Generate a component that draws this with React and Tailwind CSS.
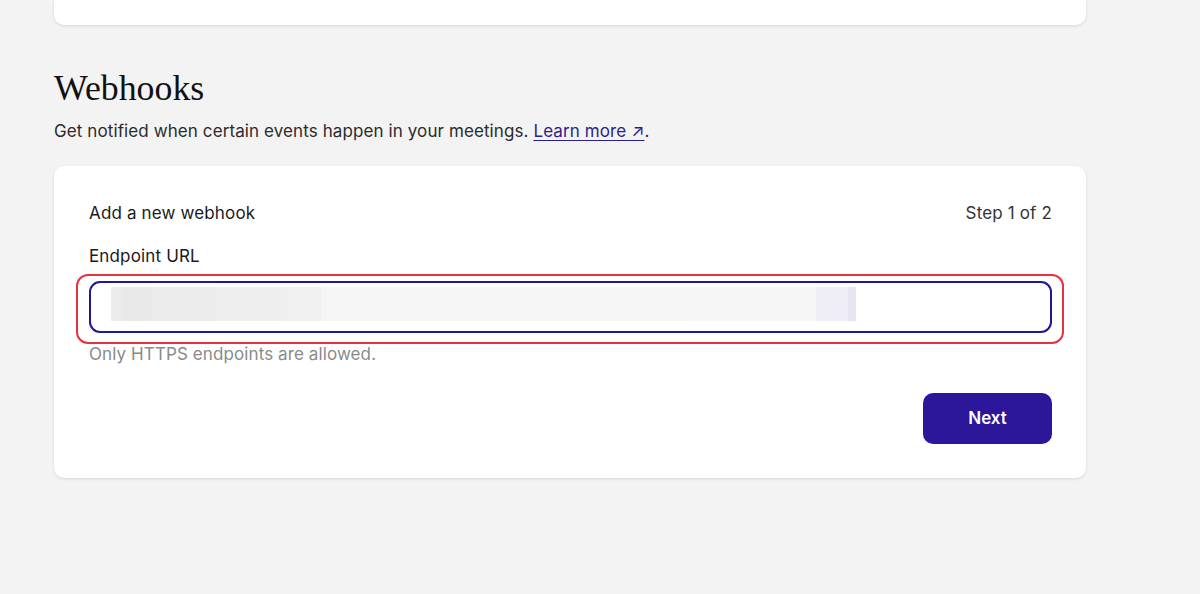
import React from "react";

export default function App() {
  return (
    <div className="w-[1200px] h-[594px] bg-[#f3f3f3] overflow-hidden" style={{ fontFamily: "Inter, 'Noto Sans', sans-serif" }}>
      <div className="ml-[54px] w-[1032px]">
        <div className="h-[25px] bg-white rounded-b-[10px] shadow-[0_1px_3px_rgba(0,0,0,0.12)]" />
        <h2 className="mt-[45px] text-[35.8px] leading-[36px] text-[#111]" style={{ fontFamily: "'Liberation Serif', 'DejaVu Serif', serif" }}>
          Webhooks
        </h2>
        <p className="mt-[13px] text-[17px] tracking-[0.1px] leading-[24px] text-[#2b2b2b]">
          Get notified when certain events happen in your meetings.{" "}
          <a className="text-[#2b1e8f] underline underline-offset-[3px]" href="#">Learn more ↗</a>.
        </p>
        <div className="mt-[23px] bg-white rounded-[10px] shadow-[0_1px_3px_rgba(0,0,0,0.12)] pl-[35px] pr-[34px] pt-[36px] pb-[34px]">
          <div className="flex justify-between items-center text-[17px] tracking-[0.15px] leading-[22px] text-[#1a1a1a]">
            <span>Add a new webhook</span>
            <span className="text-[#333]">Step 1 of 2</span>
          </div>
          <div className="mt-[21px] text-[17px] tracking-[0.15px] leading-[22px] text-[#1a1a1a]">Endpoint URL</div>
          <div className="relative mt-[14px]">
            <div className="absolute -left-[13px] -right-[12px] -top-[7px] -bottom-[11px] border-[2px] border-[#e8323f] rounded-[12px]" />
            <div className="h-[52px] border-[2px] border-[#1f1793] rounded-[11px] pl-[20px] pt-[4px]">
              <div className="flex h-[34px] w-[745px]">
                <div className="w-[10px] bg-[#ececec]" />
                <div className="w-[30px] bg-[#e9e9e9]" />
                <div className="w-[65px] bg-[#ebebeb]" />
                <div className="w-[65px] bg-[#eeeeee]" />
                <div className="w-[40px] bg-[#f0f0f0]" />
                <div className="w-[370px] bg-[#f5f5f5]" />
                <div className="w-[125px] bg-[#f6f6f6]" />
                <div className="w-[32px] bg-[#efedf5]" />
                <div className="w-[8px] bg-[#e6e4f0]" />
              </div>
            </div>
          </div>
          <div className="mt-[10px] text-[17px] tracking-[0.1px] leading-[22px] text-[#8a8a8a]">Only HTTPS endpoints are allowed.</div>
          <div className="flex justify-end mt-[28px]">
            <button className="w-[129px] h-[51px] bg-[#2c1699] rounded-[10px] text-white font-semibold text-[17px]">Next</button>
          </div>
        </div>
      </div>
    </div>
  );
}
